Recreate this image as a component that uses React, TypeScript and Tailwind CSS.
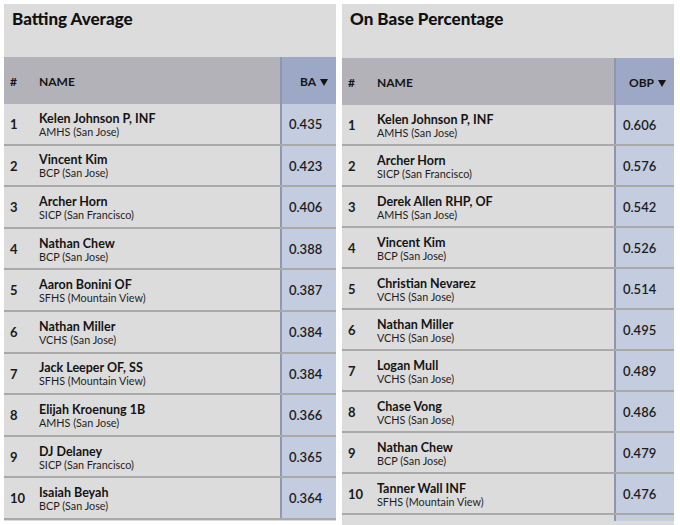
import React from "react";

type Row = { name: string; school: string; v: string };

const ba: Row[] = [
  { name: "Kelen Johnson P, INF", school: "AMHS (San Jose)", v: "0.435" },
  { name: "Vincent Kim", school: "BCP (San Jose)", v: "0.423" },
  { name: "Archer Horn", school: "SICP (San Francisco)", v: "0.406" },
  { name: "Nathan Chew", school: "BCP (San Jose)", v: "0.388" },
  { name: "Aaron Bonini OF", school: "SFHS (Mountain View)", v: "0.387" },
  { name: "Nathan Miller", school: "VCHS (San Jose)", v: "0.384" },
  { name: "Jack Leeper OF, SS", school: "SFHS (Mountain View)", v: "0.384" },
  { name: "Elijah Kroenung 1B", school: "AMHS (San Jose)", v: "0.366" },
  { name: "DJ Delaney", school: "SICP (San Francisco)", v: "0.365" },
  { name: "Isaiah Beyah", school: "BCP (San Jose)", v: "0.364" },
];

const obp: Row[] = [
  { name: "Kelen Johnson P, INF", school: "AMHS (San Jose)", v: "0.606" },
  { name: "Archer Horn", school: "SICP (San Francisco)", v: "0.576" },
  { name: "Derek Allen RHP, OF", school: "AMHS (San Jose)", v: "0.542" },
  { name: "Vincent Kim", school: "BCP (San Jose)", v: "0.526" },
  { name: "Christian Nevarez", school: "VCHS (San Jose)", v: "0.514" },
  { name: "Nathan Miller", school: "VCHS (San Jose)", v: "0.495" },
  { name: "Logan Mull", school: "VCHS (San Jose)", v: "0.489" },
  { name: "Chase Vong", school: "VCHS (San Jose)", v: "0.486" },
  { name: "Nathan Chew", school: "BCP (San Jose)", v: "0.479" },
  { name: "Tanner Wall INF", school: "SFHS (Mountain View)", v: "0.476" },
];

function Panel({
  title,
  col,
  rows,
  valW,
  rowH,
  titleH,
  extra,
}: {
  title: string;
  col: string;
  rows: Row[];
  valW: string;
  rowH: string;
  titleH: string;
  extra?: boolean;
}) {
  return (
    <div className="flex-1 flex flex-col bg-[#dcdcdc]">
      <div className={`${titleH} pl-[8px] pt-[5px]`}>
        <div className="text-[17px] font-black text-[#111] leading-[20px]">{title}</div>
      </div>
      <div className="flex h-[47px] bg-[#b4b2b9] items-center pt-[2px] text-[12px] font-bold text-[#151515]">
        <div className="w-[35px] pl-[6px]">#</div>
        <div className="flex-1">NAME</div>
        <div className={`${valW} self-stretch -mt-[2px] flex items-center justify-end pr-[8px] pt-[2px] bg-[#9ca8c6] border-l-2 border-[#8e97ae]`}>
          {col}
          <svg viewBox="0 0 8 8" className="ml-[4px] w-[8px] h-[8px]">
            <path d="M0 1 L8 1 L4 8 Z" fill="#151515" />
          </svg>
        </div>
      </div>
      {rows.map((r, i) => (
        <div key={i} className={`flex ${rowH} border-b-2 border-[#a9a9aa]`}>
          <div className="w-[35px] pl-[6px] pt-[2px] flex items-center text-[13px] font-bold text-[#1a1a1a]">{i + 1}</div>
          <div className="flex-1 flex flex-col justify-center pt-[1px]">
            <div className="text-[12.5px] font-bold text-[#141414] leading-[15px]">{r.name}</div>
            <div className="text-[10.8px] text-[#1e1e1e] leading-[12px]">{r.school}</div>
          </div>
          <div className={`${valW} flex items-center pl-[7px] pt-[2px] bg-[#c4cce0] border-l-2 border-[#8e97ae] text-[13px] font-semibold text-[#1c1c1c]`}>
            {r.v}
          </div>
        </div>
      ))}
      {extra && (
        <div className="flex h-[6px]">
          <div className="flex-1" />
          <div className={`${valW} bg-[#c4cce0] border-l-2 border-[#8e97ae]`} />
        </div>
      )}
    </div>
  );
}

export default function App() {
  return (
    <div
      className="w-[680px] h-[525px] bg-white overflow-hidden flex gap-[6px] pl-[4px] pr-[6px] pt-[4px]"
      style={{ fontFamily: 'Lato, "Liberation Sans", sans-serif' }}
    >
      <div className="w-[332px] h-[517px] flex">
        <Panel title="Batting Average" col="BA" rows={ba} valW="w-[56px]" rowH="h-[41.6px]" titleH="h-[53px]" />
      </div>
      <div className="w-[332px] h-[521px] flex">
        <Panel title="On Base Percentage" col="OBP" rows={obp} valW="w-[60px]" rowH="h-[41px]" titleH="h-[54px]" extra />
      </div>
    </div>
  );
}
